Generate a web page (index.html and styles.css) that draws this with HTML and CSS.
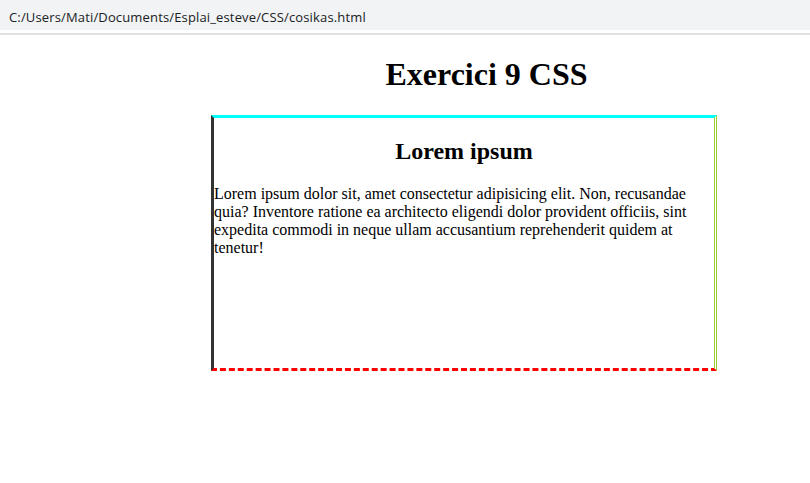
FILE: index.html
```html
<!DOCTYPE html>
<html lang="es">
<head>
<meta charset="utf-8">
<title>Exercici 9 CSS</title>
<link rel="stylesheet" href="styles.css">
</head>
<body>
<div class="addressbar"><span class="url">C:/Users/Mati/Documents/Esplai_esteve/CSS/cosikas.html</span></div>
<div class="divider"></div>
<div class="page">
  <h1 class="title">Exercici 9 CSS</h1>
  <div class="box">
    <h2 class="box-title">Lorem ipsum</h2>
    <p class="box-text">Lorem ipsum dolor sit, amet consectetur adipisicing elit. Non, recusandae quia? Inventore ratione ea architecto eligendi dolor provident officiis, sint expedita commodi in neque ullam accusantium reprehenderit quidem at tenetur!</p>
  </div>
</div>
</body>
</html>
```
FILE: styles.css
```css
html, body {
  margin: 0;
  padding: 0;
  background: #ffffff;
}
body {
  font-family: "Liberation Serif", "Times New Roman", serif;
  color: #000;
}
.addressbar {
  height: 30px;
  background: #f1f3f4;
  display: flex;
  align-items: center;
  padding-left: 9px;
  padding-top: 3px;
  box-sizing: border-box;
}
.url {
  font-family: "Open Sans", "Noto Sans", sans-serif;
  font-size: 13px;
  color: #202124;
  letter-spacing: 0.15px;
}
.divider {
  margin-top: 3px;
  height: 2px;
  background: #dfe1e5;
}
.page {
  padding: 0 8px;
}
.title {
  font-size: 32px;
  font-weight: bold;
  margin: 21.44px 0;
  text-align: center;
  padding-left: 163px;
}
.box {
  width: 500px;
  height: 250px;
  margin-left: 203px;
  border-top: 3px solid #00ffff;
  border-left: 3px solid #333333;
  border-right: 3px double #9acd32;
  border-bottom: 3px dashed #ff0000;
}
.box-title {
  font-size: 24px;
  font-weight: bold;
  text-align: center;
  margin: 19.92px 0;
}
.box-text {
  font-size: 16px;
  margin: 16px 0;
}
```
